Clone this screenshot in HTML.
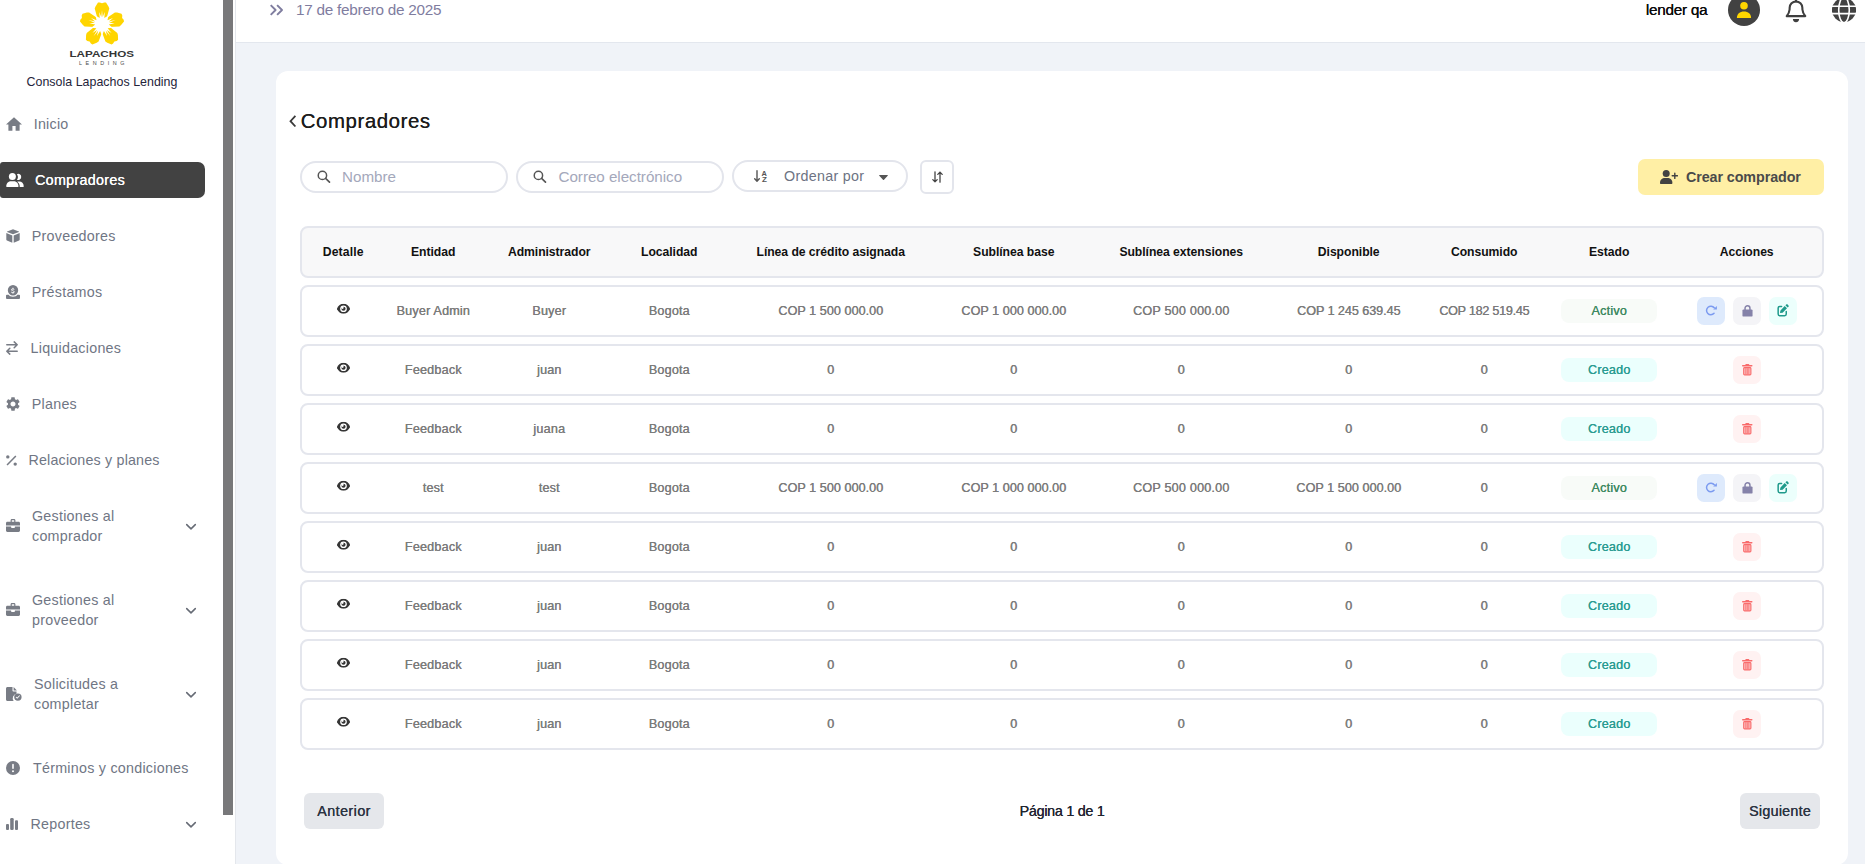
<!DOCTYPE html>
<html lang="es">
<head>
<meta charset="utf-8">
<title>Consola Lapachos Lending - Compradores</title>
<style>
*{box-sizing:border-box;margin:0;padding:0}
html,body{width:1865px;height:864px;overflow:hidden}
body{position:relative;background:#f0f3f8;font-family:"Liberation Sans",sans-serif;color:#212121}
svg{display:block}
.abs{position:absolute}

/* ---------- sidebar ---------- */
.sidebar{position:absolute;left:0;top:0;width:236px;height:864px;background:#fff;border-right:1px solid #e4e7ec}
.thumb{position:absolute;left:223px;top:0;width:10px;height:815px;background:#78787a}
.logo{position:absolute;left:60px;top:0;width:84px;height:68px}
.brand{position:absolute;left:0;top:75px;width:204px;text-align:center;font-size:12.4px;line-height:14px;color:#24243a;letter-spacing:.03px;white-space:nowrap}
.nav a{position:absolute;left:0;width:205px;height:36px;display:block;color:#707684;font-size:14.3px;text-decoration:none;white-space:nowrap}
.nav a svg{position:absolute;fill:#787c85}
.nav a span{position:absolute;line-height:20px;letter-spacing:.25px}
.nav a.on{background:#424242;border-radius:3px 7px 7px 3px;color:#fff}
.nav a.on svg{fill:#fff}
.nav a.on span{letter-spacing:.3px;font-weight:400;text-shadow:.2px 0 0 #fff}
.nav .chev{position:absolute;left:185px;width:12px;height:8px;fill:none!important;stroke:#666b75;stroke-width:1.5;stroke-linecap:round;stroke-linejoin:round}

/* ---------- topbar ---------- */
.topbar{position:absolute;left:236px;top:0;width:1629px;height:43px;background:#fff;border-bottom:1px solid #e3e7ee}
.date{position:absolute;left:60px;top:1px;font-size:15.3px;line-height:18px;color:#7f7d9f;letter-spacing:-.25px;white-space:nowrap}
.user{position:absolute;left:1409.8px;top:1px;font-size:15.3px;line-height:18px;color:#0c0c0c;letter-spacing:-.25px;text-shadow:.15px 0 0 #0c0c0c;white-space:nowrap}
.avatar{position:absolute;left:1492px;top:-6px;width:32px;height:32px;border-radius:50%;background:#424242}

/* ---------- card ---------- */
.card{position:absolute;left:276px;top:71px;width:1572px;height:794px;background:#fff;border-radius:12px}
h1{position:absolute;left:24.7px;top:38px;font-size:20.4px;line-height:24px;font-weight:400;color:#1d1d1d;letter-spacing:.58px;white-space:nowrap;text-shadow:.12px 0 0 #1d1d1d}
.pill{position:absolute;height:32px;border:2px solid #e3e5ec;border-radius:16px;background:#fff}
.pill span{position:absolute;top:5px;line-height:18px;font-size:15.2px;color:#a4a8bb;letter-spacing:.25px;white-space:nowrap}
.sq{position:absolute;left:644px;top:89px;width:34px;height:34px;border:2px solid #e3e5ec;border-radius:6px;background:#fff}
.create{position:absolute;left:1362px;top:88px;width:186px;height:36px;border-radius:7px;background:#ffefa5}
.create span{position:absolute;left:48px;top:9px;font-size:14.3px;line-height:18px;font-weight:700;color:#4a4a4a;letter-spacing:-.08px;white-space:nowrap}

/* ---------- table ---------- */
.tr{position:absolute;left:24px;width:1524px;height:52px;border:2px solid #e4e6ed;border-radius:8px;background:#fff}
.tr.head{background:#f8f8f9;top:155px}
.cells{position:absolute;left:-2.8px;top:-2px;width:1524px;height:52px;display:grid;grid-template-columns:88px 92px 140px 100px 223px 143px 192px 143px 128px 122px 153px;align-items:center;justify-items:center}
.cells>div{font-size:12.6px;line-height:16px;color:#7b7b7b;letter-spacing:.2px;white-space:nowrap;text-shadow:.3px 0 0 #7b7b7b}
.head .cells>div{font-size:12.2px;font-weight:700;color:#111;letter-spacing:-.05px;text-shadow:none}
.badge{width:96px;height:24px;border-radius:8px;line-height:24px!important;text-align:center}
.badge.act{background:#f8fbf8;color:#3f8a62!important;text-shadow:.15px 0 0 #3f8a62!important}
.badge.cre{background:#ebfffd;color:#2b9c92!important;text-shadow:.15px 0 0 #2b9c92!important}
.acts{display:flex;gap:8px}
.eye{transform:translateY(-2.35px)}
.btn{width:28px;height:28px;border-radius:7px;position:relative}
.btn svg{position:absolute}
.b1{background:#deeafc}.b2{background:#f4f4f7}.b3{background:#ecfffc}.b4{background:#fff2f2}

/* ---------- pager ---------- */
.pg{position:absolute;top:722px;width:80px;height:36px;border-radius:6px;background:#e5e7eb;font-size:14.3px;line-height:36px;text-align:center;color:#2c3442;letter-spacing:.25px;text-shadow:.2px 0 0 #2c3442}
.pgt{position:absolute;left:0;width:1572px;top:731px;text-align:center;font-size:14.3px;line-height:18px;color:#1f2430;letter-spacing:-.25px;text-shadow:.2px 0 0 #1f2430}
</style>
</head>
<body>

<!-- SIDEBAR -->
<aside class="sidebar">
  <div class="logo"><svg width="84" height="68" viewBox="0 0 84 68"><g fill="#ffd500"><polygon points="37.7,19.2 34.7,8.5 35.5,6.4 38.0,2.6 39.7,2.4 42.0,3.3 44.3,2.4 46.0,2.6 48.5,6.4 49.3,8.5 46.3,19.2"/><polygon points="45.6,18.7 54.9,12.5 57.1,12.6 61.5,13.8 62.3,15.4 62.1,17.9 63.7,19.8 64.0,21.5 61.1,25.0 59.4,26.5 48.3,26.9"/><polygon points="48.6,26.0 57.3,33.0 57.9,35.1 58.1,39.7 56.8,40.9 54.4,41.5 53.1,43.6 51.6,44.4 47.3,42.8 45.4,41.6 41.5,31.1"/><polygon points="42.5,31.1 38.6,41.6 36.7,42.8 32.4,44.4 30.9,43.6 29.6,41.5 27.2,40.9 25.9,39.7 26.1,35.1 26.7,33.0 35.4,26.0"/><polygon points="35.7,26.9 24.6,26.5 22.9,25.0 20.0,21.5 20.3,19.8 21.9,17.9 21.7,15.4 22.5,13.8 26.9,12.6 29.1,12.5 38.4,18.7"/></g><polygon fill="#fff" points="42.0,10.2 42.7,17.0 44.8,11.9 44.3,18.0 46.3,16.7 48.5,15.5 48.0,18.0 47.4,20.3 53.0,17.9 48.8,21.4 55.5,20.0 49.2,22.8 54.7,23.2 48.8,24.6 50.6,26.1 52.5,27.8 50.0,28.1 47.6,28.3 51.6,32.9 46.9,29.9 50.3,35.9 45.8,30.8 47.1,36.1 43.9,30.9 43.1,33.1 42.0,35.4 40.9,33.1 40.1,30.9 36.9,36.1 38.2,30.8 33.7,35.9 37.1,29.9 32.4,32.9 36.4,28.3 34.0,28.1 31.5,27.8 33.4,26.1 35.2,24.6 29.3,23.2 34.8,22.8 28.5,20.0 35.2,21.4 31.0,17.9 36.6,20.3 36.0,18.0 35.5,15.5 37.7,16.7 39.7,18.0 39.2,11.9 41.3,17.0"/><circle cx="42" cy="24.4" r="6.8" fill="#fff"/><text x="9.500" y="56.700" font-family="Liberation Sans, sans-serif" font-weight="700" font-size="8.200" fill="#353535" textLength="64.500" lengthAdjust="spacingAndGlyphs">LAPACHOS</text><text x="19" y="65" font-family="Liberation Sans, sans-serif" font-size="5.400" fill="#4a4a4a" textLength="45.500" lengthAdjust="spacing">LENDING</text></svg></div>
  <div class="brand">Consola Lapachos Lending</div>
  <nav class="nav">
<a style="top:106px"><svg style="left:6px;top:11px" width="16" height="14" viewBox="2 3 20 17"><path d="M10 20v-6h4v6h5v-8h3L12 3 2 12h3v8z"/></svg><span style="left:33.7px;top:8px">Inicio</span></a>
<a class="on" style="top:162px"><svg style="left:6px;top:11px" width="18" height="14" viewBox="0 0 20 16"><circle cx="7" cy="4" r="4"/><path d="M0 15c0-3.400 2.700-5.600 5.600-5.600h2.800c2.900 0 5.600 2.200 5.600 5.600 0 .6-.4 1-1 1H1c-.6 0-1-.4-1-1z"/><path d="M12.200 1.300a3.500 3.500 0 1 1 0 6.400 5.400 5.400 0 0 0 0-6.400z"/><path d="M15.300 16h3.700c.6 0 1-.4 1-1 0-3-2.300-5.300-5.100-5.300h-1.100c-.4 0-.8 0-1.200.2 1.700 1.200 2.800 3 2.800 5.300 0 .3 0 .500-.1.800z"/></svg><span style="left:35px;top:8px">Compradores</span></a>
<a style="top:218px"><svg style="left:6px;top:11px" width="14" height="14" viewBox="0 0 14 14"><path d="M7 .2l5.900 2.300c.2.100.2.300 0 .4L7 5.300 1.100 2.900c-.2-.100-.2-.300 0-.4z"/><path d="M.3 4.100l6 2.400v7.200L.9 11.400c-.4-.200-.6-.500-.6-.900z"/><path d="M13.700 4.100l-6 2.400v7.200l5.400-2.300c.4-.200.6-.500.6-.900z"/></svg><span style="left:31.8px;top:8px">Proveedores</span></a>
<a style="top:274px"><svg style="left:6px;top:11px" width="14" height="14" viewBox="0 0 14 14"><path d="M7 0a5.200 5.200 0 1 0 0 10.400A5.200 5.200 0 0 0 7 0zm.4 8v.7h-.9V8c-.7-.1-1.300-.5-1.400-1.300h.9c.1.400.4.600.9.600.6 0 .8-.3.800-.5 0-.3-.2-.6-1-.8-.9-.2-1.500-.6-1.500-1.300 0-.6.500-1.100 1.300-1.200v-.8h.9v.8c.7.200 1.100.7 1.100 1.300h-.9c0-.4-.3-.6-.7-.6s-.8.200-.8.500c0 .3.300.5 1 .700s1.500.5 1.500 1.400c0 .7-.5 1.100-1.200 1.200z"/><path d="M0 10.600c0-.5.400-.9.900-.9h1.700c.7 1 2.400 2 4.400 2s3.700-1 4.400-2h1.700c.5 0 .9.4.9.900v2.500c0 .5-.4.900-.9.900H.9c-.5 0-.9-.4-.9-.9z"/></svg><span style="left:31.8px;top:8px">Préstamos</span></a>
<a style="top:330px"><svg style="left:6px;top:11px;fill:none;stroke:#787c85;stroke-width:1.500;stroke-linecap:round;stroke-linejoin:round" width="12" height="14" viewBox="0 0 12 14"><path d="M.8 3.800h10.400M8.200 .9l3 2.900-3 2.900M11.200 10.200H.8M3.800 7.300l-3 2.900 3 2.900"/></svg><span style="left:30.500px;top:8px">Liquidaciones</span></a>
<a style="top:386px"><svg style="left:6px;top:11px" width="14" height="14" viewBox="2 2 20 20"><path d="M19.140 12.940c.04-.3.060-.61.060-.94 0-.32-.02-.64-.07-.94l2.030-1.580c.18-.14.230-.41.120-.61l-1.920-3.320c-.12-.22-.37-.29-.59-.22l-2.390.96c-.5-.38-1.030-.7-1.620-.94l-.36-2.540c-.04-.24-.24-.41-.48-.41h-3.840c-.24 0-.43.170-.47.410l-.36 2.540c-.59.240-1.130.57-1.620.94l-2.390-.96c-.22-.08-.47 0-.59.220L2.740 8.870c-.12.210-.08.470.12.610l2.030 1.580c-.05.300-.09.630-.09.940s.02.640.07.940l-2.030 1.580c-.18.140-.23.410-.12.610l1.920 3.320c.12.220.37.290.59.220l2.390-.96c.5.380 1.030.7 1.620.94l.36 2.540c.05.240.24.410.48.410h3.840c.24 0 .44-.17.470-.41l.36-2.540c.59-.24 1.130-.56 1.620-.94l2.390.96c.22.080.47 0 .59-.22l1.920-3.320c.12-.22.070-.47-.12-.61l-2.010-1.580zM12 15.600c-1.980 0-3.600-1.620-3.600-3.600s1.620-3.600 3.600-3.600 3.600 1.620 3.600 3.600-1.620 3.600-3.600 3.600z"/></svg><span style="left:31.8px;top:8px">Planes</span></a>
<a style="top:442px"><svg style="left:6px;top:13px" width="11" height="11" viewBox="0 0 11 11"><path d="M9.300.5l1.100 1.100-8.800 8.900L.5 9.400z"/><circle cx="1.800" cy="1.900" r="1.700"/><circle cx="9.200" cy="9.100" r="1.700"/></svg><span style="left:28.500px;top:8px;letter-spacing:.17px">Relaciones y planes</span></a>
<a style="top:498px;height:56px"><svg style="left:6px;top:21px" width="14" height="13" viewBox="0 0 14 13"><path d="M4.600 1.300v1.500H1.400C.6 2.800 0 3.400 0 4.200v2.300h14V4.200c0-.8-.6-1.400-1.400-1.400H9.400V1.300C9.400.6 8.800 0 8.100 0H5.900c-.7 0-1.300.6-1.300 1.300zm1.200 0c0-.1 0-.1.100-.1h2.200c.1 0 .1 0 .1.100v1.500H5.800z"/><path d="M0 7.600v4c0 .8.600 1.400 1.400 1.400h11.200c.8 0 1.400-.6 1.400-1.400v-4H8.900v.6c0 .4-.3.700-.7.700H5.800c-.4 0-.7-.3-.7-.7v-.6z"/></svg><span style="left:32px;top:8px">Gestiones al<br>comprador</span><svg class="chev" style="top:24.8px" viewBox="0 0 12 8"><path d="M1.700 1.600L6 5.900l4.300-4.300"/></svg></a>
<a style="top:582px;height:56px"><svg style="left:6px;top:21px" width="14" height="13" viewBox="0 0 14 13"><path d="M4.600 1.300v1.500H1.400C.6 2.800 0 3.400 0 4.200v2.300h14V4.200c0-.8-.6-1.400-1.400-1.400H9.400V1.300C9.400.6 8.800 0 8.100 0H5.900c-.7 0-1.300.6-1.300 1.300zm1.200 0c0-.1 0-.1.100-.1h2.200c.1 0 .1 0 .1.100v1.500H5.800z"/><path d="M0 7.600v4c0 .8.600 1.400 1.400 1.400h11.200c.8 0 1.400-.6 1.400-1.400v-4H8.900v.6c0 .4-.3.700-.7.700H5.800c-.4 0-.7-.3-.7-.7v-.6z"/></svg><span style="left:32px;top:8px">Gestiones al<br>proveedor</span><svg class="chev" style="top:24.8px" viewBox="0 0 12 8"><path d="M1.700 1.600L6 5.900l4.300-4.300"/></svg></a>
<a style="top:666px;height:56px"><svg style="left:6px;top:21px" width="16" height="14" viewBox="0 0 16 14"><path d="M1.500 0C.7 0 0 .7 0 1.500v11C0 13.300.7 14 1.500 14h6.100a4.600 4.600 0 0 1 2.900-7.200V4.500H7.300c-.5 0-.8-.4-.8-.8V0z"/><path d="M7.600 0v3.400h3.300z"/><path d="M11.900 7.600a3.700 3.700 0 1 0 0 7.400 3.700 3.700 0 0 0 0-7.400zm1.900 2.700l-2.300 2.500c-.2.200-.4.200-.6 0l-1-1.100c-.2-.2-.1-.4 0-.6.200-.1.400-.1.600 0l.7.700 2-2.100c.2-.2.400-.2.600 0 .1.200.1.400 0 .6z" transform="translate(0 -1.200)"/></svg><span style="left:34px;top:8px">Solicitudes a<br>completar</span><svg class="chev" style="top:24.8px" viewBox="0 0 12 8"><path d="M1.700 1.600L6 5.900l4.300-4.300"/></svg></a>
<a style="top:750px"><svg style="left:6px;top:11px" width="14" height="14" viewBox="0 0 14 14"><path d="M7 0a7 7 0 1 0 0 14A7 7 0 0 0 7 0zm-.8 3.500c0-.4.400-.8.800-.8s.8.400.8.800v3.700c0 .4-.4.800-.8.800s-.8-.4-.8-.8zM7 11.300a1 1 0 1 1 0-2 1 1 0 0 1 0 2z"/></svg><span style="left:33px;top:8px">Términos y condiciones</span></a>
<a style="top:806px"><svg style="left:6px;top:12px" width="12" height="12" viewBox="0 0 12 12"><rect x="0" y="6" width="3" height="6" rx="1"/><rect x="4.200" y="0" width="3.500" height="12" rx="1.300"/><rect x="9" y="2.200" width="3" height="9.800" rx="1"/></svg><span style="left:30.500px;top:8px">Reportes</span><svg class="chev" style="top:14.8px" viewBox="0 0 12 8"><path d="M1.700 1.600L6 5.900l4.300-4.300"/></svg></a>
</nav>
  <div class="thumb"></div>
</aside>

<!-- TOPBAR -->
<header class="topbar">
  <svg class="abs" style="left:33px;top:3px;fill:none;stroke:#7f7d9f;stroke-width:1.900;stroke-linecap:butt;stroke-linejoin:round" width="15" height="14" viewBox="0 0 15 14"><path d="M1.700 2.100L6.600 7l-4.900 4.900M8.100 2.100L13 7l-4.900 4.900"/></svg>
  <div class="date">17 de febrero de 2025</div>
  <div class="user">lender qa</div>
  <div class="avatar"><svg class="abs" style="left:8px;top:7px" width="16" height="18" viewBox="0 0 16 18"><circle cx="8" cy="4.700" r="3.800" fill="#ffd600"/><path d="M.9 17c0-4.300 2.900-6.600 7.100-6.600s7.100 2.300 7.100 6.600z" fill="#ffd600"/></svg></div>
  <svg class="abs" style="left:1549px;top:-2px" width="22" height="25" viewBox="0 0 22 25"><path d="M11 1.200v2.300" stroke="#3f3f3f" stroke-width="2.200" stroke-linecap="round"/><path d="M1.700 18.100H20.300C18.600 16 17.600 14 17.400 11.500L17.350 9.800C17.350 6.300 14.500 3.550 11 3.550S4.650 6.300 4.650 9.800L4.600 11.500C4.400 14 3.400 16 1.700 18.100Z" fill="none" stroke="#3f3f3f" stroke-width="2.100" stroke-linejoin="round"/><path d="M7.900 21.100h6.200a3.100 3.100 0 0 1-6.200 0z" fill="#3f3f3f"/></svg>
  <svg class="abs" style="left:1596px;top:-2px" width="24" height="25" viewBox="0 0 24 25"><circle cx="12" cy="12" r="12.100" fill="#424242"/><g fill="none" stroke="#fff" stroke-width="1.600"><ellipse cx="12" cy="12" rx="5.300" ry="12.800"/><path d="M-1 8.300h26M-1 15.650h26"/></g></svg>
</header>

<!-- CARD -->
<main class="card">
  <svg class="abs" style="left:12px;top:43px;fill:none;stroke:#3a3a3a;stroke-width:1.8;stroke-linecap:butt;stroke-linejoin:miter" width="9" height="14" viewBox="0 0 9 14"><path d="M7.4 1.9L2.5 7.2l4.900 5.300"/></svg>
  <h1>Compradores</h1>

  <div class="pill" style="left:24px;top:90px;width:208px"><svg class="abs" style="left:15.3px;top:7.3px" width="14" height="13" viewBox="0 0 15 14"><circle cx="5.800" cy="5.800" r="4.500" fill="none" stroke="#555" stroke-width="1.600"/><path d="M9.200 9.100l4.200 3.900" stroke="#555" stroke-width="1.800" stroke-linecap="round"/></svg><span style="left:40px;letter-spacing:0">Nombre</span></div>
  <div class="pill" style="left:240px;top:90px;width:208px"><svg class="abs" style="left:15.3px;top:7.3px" width="14" height="13" viewBox="0 0 15 14"><circle cx="5.800" cy="5.800" r="4.500" fill="none" stroke="#555" stroke-width="1.600"/><path d="M9.200 9.100l4.200 3.900" stroke="#555" stroke-width="1.800" stroke-linecap="round"/></svg><span style="left:40.500px;letter-spacing:-.03px">Correo electrónico</span></div>
  <div class="pill" style="left:456px;top:89px;width:176px"><svg class="abs" style="left:20px;top:8px" width="14" height="13" viewBox="0 0 14 13"><path d="M3 .8v10M.7 8.800L3 11.200l2.300-2.400" fill="none" stroke="#555" stroke-width="1.400" stroke-linecap="round" stroke-linejoin="round"/><text x="7.4" y="5.7" font-family="Liberation Sans, sans-serif" font-weight="700" font-size="7.4" fill="#555">A</text><text x="8.1" y="12.3" font-family="Liberation Sans, sans-serif" font-weight="700" font-size="6.7" fill="#555" textLength="4.9" lengthAdjust="spacingAndGlyphs">Z</text></svg><span style="left:50px;top:4px;line-height:20px;font-size:14.300px;color:#6d7383;letter-spacing:.3px">Ordenar por</span><svg class="abs" style="left:144.500px;top:12.500px" width="9" height="5" viewBox="0 0 9 5"><path d="M.6 0h7.800c.4 0 .6.500.3.800L5 4.700c-.3.300-.7.300-1 0L.3.800C0 .5.200 0 .6 0z" fill="#555"/></svg></div>
  <div class="sq"><svg class="abs" style="left:10px;top:9px;fill:none;stroke:#444;stroke-width:1.300;stroke-linecap:round;stroke-linejoin:round" width="11" height="12" viewBox="0 0 11 12"><path d="M3 .8v10M.8 8.600L3 10.900l2.200-2.300M8 11.200v-10M5.800 3.400L8 1.100l2.200 2.300"/></svg></div>
  <div class="create"><svg class="abs" style="left:22px;top:11px" width="18" height="14" viewBox="0 0 18 14"><circle cx="6.200" cy="3.500" r="3.500" fill="#424242"/><path d="M0 13c0-3.200 2.200-5 4.900-5h2.600c2.700 0 4.900 1.800 4.900 5 0 .6-.4 1-1 1H1c-.6 0-1-.4-1-1z" fill="#424242"/><path d="M14.800 3.200v5.200M12.200 5.800h5.200" stroke="#424242" stroke-width="1.400" stroke-linecap="round"/></svg><span>Crear comprador</span></div>

  <div class="tr head"><div class="cells"><div style="letter-spacing:.15px">Detalle</div><div>Entidad</div><div>Administrador</div><div>Localidad</div><div>Línea de crédito asignada</div><div>Sublínea base</div><div>Sublínea extensiones</div><div>Disponible</div><div>Consumido</div><div>Estado</div><div>Acciones</div></div></div>
  <div class="tr" style="top:214px"><div class="cells"><div><svg class="eye" width="13" height="10.2" viewBox="0 0 13 10.2"><path d="M6.5 0C3.6 0 1.2 1.9.1 4.600c-.1.300-.1.700 0 1C1.2 8.300 3.600 10.200 6.500 10.200s5.300-1.900 6.400-4.600c.1-.3.1-.7 0-1C11.800 1.900 9.400 0 6.500 0z" fill="#353535"/><circle cx="6.500" cy="5.100" r="3.350" fill="#fff"/><circle cx="6.500" cy="5.100" r="2.100" fill="#353535"/><circle cx="5.500" cy="4.100" r="1.150" fill="#fff"/></svg></div><div>Buyer Admin</div><div>Buyer</div><div>Bogota</div><div style="letter-spacing:.05px">COP 1 500 000.00</div><div style="letter-spacing:.05px">COP 1 000 000.00</div><div>COP 500 000.00</div><div style="letter-spacing:-.05px">COP 1 245 639.45</div><div style="letter-spacing:-.25px">COP 182 519.45</div><div class="badge act">Activo</div><div class="acts"><div class="btn b1"><svg style="left:8px;top:8.4px" width="13" height="11" viewBox="0 0 13 11"><path d="M9.24 2.8A4.3 4.3 0 1 0 9.05 8.33" fill="none" stroke="#7c9bf0" stroke-width="1.5" stroke-linecap="round"/><path d="M11.9 .9v3.7H8.2z" fill="#7c9bf0"/></svg></div><div class="btn b2"><svg style="left:9.4px;top:8px" width="11" height="12" viewBox="0 0 11 12"><path d="M3.05 5V3.2a2.45 2.45 0 0 1 4.9 0V5" fill="none" stroke="#8582a9" stroke-width="1.5"/><rect x=".45" y="4.4" width="10.1" height="7.2" rx="1.2" fill="#8582a9"/></svg></div><div class="btn b3"><svg style="left:7.5px;top:7.4px" width="13" height="13" viewBox="0 0 13 13"><path d="M5.6 2.45H3.75c-.9 0-1.6.7-1.6 1.6v6c0 .9.7 1.6 1.6 1.6h4.9c.9 0 1.6-.7 1.6-1.6V7.6" fill="none" stroke="#1f9a8b" stroke-width="1.5" stroke-linecap="round"/><path d="M10.200.5c.4-.4 1-.4 1.400 0l.9.900c.4.400.4 1 0 1.400l-.8.800-2.300-2.300zM8.700 2l2.300 2.300-4.100 4.100c-.2.200-.4.300-.6.300l-1.800.4c-.3.100-.5-.2-.500-.5l.4-1.800c.1-.2.200-.4.300-.6z" fill="#1f9a8b"/></svg></div></div></div></div>
  <div class="tr" style="top:273px"><div class="cells"><div><svg class="eye" width="13" height="10.2" viewBox="0 0 13 10.2"><path d="M6.5 0C3.6 0 1.2 1.9.1 4.600c-.1.300-.1.700 0 1C1.2 8.300 3.600 10.200 6.500 10.200s5.300-1.900 6.400-4.600c.1-.3.1-.7 0-1C11.800 1.900 9.400 0 6.500 0z" fill="#353535"/><circle cx="6.500" cy="5.100" r="3.350" fill="#fff"/><circle cx="6.500" cy="5.100" r="2.100" fill="#353535"/><circle cx="5.500" cy="4.100" r="1.150" fill="#fff"/></svg></div><div>Feedback</div><div>juan</div><div>Bogota</div><div>0</div><div>0</div><div>0</div><div>0</div><div>0</div><div class="badge cre">Creado</div><div class="acts"><div class="btn b4"><svg style="left:9.5px;top:7.9px" width="11" height="12" viewBox="0 0 11 12"><rect x="3.3" y="0" width="4" height="1.6" rx=".8" fill="#f96b6b"/><rect x="0" y=".9" width="10.5" height="1.5" rx=".75" fill="#f96b6b"/><rect x="1.7" y="3.6" width="7.2" height="7.3" rx=".9" fill="#fdc0c0" stroke="#f96b6b" stroke-width="1.1"/><path d="M3.8 4.2v6M5.3 4.2v6M6.8 4.2v6" stroke="#f96b6b" stroke-width=".8"/></svg></div></div></div></div>
  <div class="tr" style="top:332px"><div class="cells"><div><svg class="eye" width="13" height="10.2" viewBox="0 0 13 10.2"><path d="M6.5 0C3.6 0 1.2 1.9.1 4.600c-.1.300-.1.700 0 1C1.2 8.300 3.600 10.200 6.500 10.200s5.300-1.900 6.400-4.600c.1-.3.1-.7 0-1C11.800 1.900 9.400 0 6.500 0z" fill="#353535"/><circle cx="6.500" cy="5.100" r="3.350" fill="#fff"/><circle cx="6.500" cy="5.100" r="2.100" fill="#353535"/><circle cx="5.500" cy="4.100" r="1.150" fill="#fff"/></svg></div><div>Feedback</div><div>juana</div><div>Bogota</div><div>0</div><div>0</div><div>0</div><div>0</div><div>0</div><div class="badge cre">Creado</div><div class="acts"><div class="btn b4"><svg style="left:9.5px;top:7.9px" width="11" height="12" viewBox="0 0 11 12"><rect x="3.3" y="0" width="4" height="1.6" rx=".8" fill="#f96b6b"/><rect x="0" y=".9" width="10.5" height="1.5" rx=".75" fill="#f96b6b"/><rect x="1.7" y="3.6" width="7.2" height="7.3" rx=".9" fill="#fdc0c0" stroke="#f96b6b" stroke-width="1.1"/><path d="M3.8 4.2v6M5.3 4.2v6M6.8 4.2v6" stroke="#f96b6b" stroke-width=".8"/></svg></div></div></div></div>
  <div class="tr" style="top:391px"><div class="cells"><div><svg class="eye" width="13" height="10.2" viewBox="0 0 13 10.2"><path d="M6.5 0C3.6 0 1.2 1.9.1 4.600c-.1.300-.1.700 0 1C1.2 8.300 3.600 10.200 6.500 10.200s5.300-1.900 6.400-4.600c.1-.3.1-.7 0-1C11.800 1.900 9.400 0 6.500 0z" fill="#353535"/><circle cx="6.500" cy="5.100" r="3.350" fill="#fff"/><circle cx="6.500" cy="5.100" r="2.100" fill="#353535"/><circle cx="5.500" cy="4.100" r="1.150" fill="#fff"/></svg></div><div>test</div><div>test</div><div>Bogota</div><div style="letter-spacing:.05px">COP 1 500 000.00</div><div style="letter-spacing:.05px">COP 1 000 000.00</div><div>COP 500 000.00</div><div style="letter-spacing:.05px">COP 1 500 000.00</div><div>0</div><div class="badge act">Activo</div><div class="acts"><div class="btn b1"><svg style="left:8px;top:8.4px" width="13" height="11" viewBox="0 0 13 11"><path d="M9.24 2.8A4.3 4.3 0 1 0 9.05 8.33" fill="none" stroke="#7c9bf0" stroke-width="1.5" stroke-linecap="round"/><path d="M11.9 .9v3.7H8.2z" fill="#7c9bf0"/></svg></div><div class="btn b2"><svg style="left:9.4px;top:8px" width="11" height="12" viewBox="0 0 11 12"><path d="M3.05 5V3.2a2.45 2.45 0 0 1 4.9 0V5" fill="none" stroke="#8582a9" stroke-width="1.5"/><rect x=".45" y="4.4" width="10.1" height="7.2" rx="1.2" fill="#8582a9"/></svg></div><div class="btn b3"><svg style="left:7.5px;top:7.4px" width="13" height="13" viewBox="0 0 13 13"><path d="M5.6 2.45H3.75c-.9 0-1.6.7-1.6 1.6v6c0 .9.7 1.6 1.6 1.6h4.9c.9 0 1.6-.7 1.6-1.6V7.6" fill="none" stroke="#1f9a8b" stroke-width="1.5" stroke-linecap="round"/><path d="M10.200.5c.4-.4 1-.4 1.400 0l.9.900c.4.400.4 1 0 1.400l-.8.800-2.300-2.300zM8.700 2l2.300 2.300-4.100 4.100c-.2.200-.4.300-.6.300l-1.800.4c-.3.100-.5-.2-.500-.5l.4-1.800c.1-.2.200-.4.300-.6z" fill="#1f9a8b"/></svg></div></div></div></div>
  <div class="tr" style="top:450px"><div class="cells"><div><svg class="eye" width="13" height="10.2" viewBox="0 0 13 10.2"><path d="M6.5 0C3.6 0 1.2 1.9.1 4.600c-.1.300-.1.700 0 1C1.2 8.300 3.600 10.200 6.500 10.200s5.300-1.900 6.400-4.600c.1-.3.1-.7 0-1C11.800 1.900 9.400 0 6.500 0z" fill="#353535"/><circle cx="6.500" cy="5.100" r="3.350" fill="#fff"/><circle cx="6.500" cy="5.100" r="2.100" fill="#353535"/><circle cx="5.500" cy="4.100" r="1.150" fill="#fff"/></svg></div><div>Feedback</div><div>juan</div><div>Bogota</div><div>0</div><div>0</div><div>0</div><div>0</div><div>0</div><div class="badge cre">Creado</div><div class="acts"><div class="btn b4"><svg style="left:9.5px;top:7.9px" width="11" height="12" viewBox="0 0 11 12"><rect x="3.3" y="0" width="4" height="1.6" rx=".8" fill="#f96b6b"/><rect x="0" y=".9" width="10.5" height="1.5" rx=".75" fill="#f96b6b"/><rect x="1.7" y="3.6" width="7.2" height="7.3" rx=".9" fill="#fdc0c0" stroke="#f96b6b" stroke-width="1.1"/><path d="M3.8 4.2v6M5.3 4.2v6M6.8 4.2v6" stroke="#f96b6b" stroke-width=".8"/></svg></div></div></div></div>
  <div class="tr" style="top:509px"><div class="cells"><div><svg class="eye" width="13" height="10.2" viewBox="0 0 13 10.2"><path d="M6.5 0C3.6 0 1.2 1.9.1 4.600c-.1.300-.1.700 0 1C1.2 8.300 3.600 10.200 6.500 10.200s5.300-1.900 6.400-4.600c.1-.3.1-.7 0-1C11.800 1.900 9.400 0 6.500 0z" fill="#353535"/><circle cx="6.500" cy="5.100" r="3.350" fill="#fff"/><circle cx="6.500" cy="5.100" r="2.100" fill="#353535"/><circle cx="5.500" cy="4.100" r="1.150" fill="#fff"/></svg></div><div>Feedback</div><div>juan</div><div>Bogota</div><div>0</div><div>0</div><div>0</div><div>0</div><div>0</div><div class="badge cre">Creado</div><div class="acts"><div class="btn b4"><svg style="left:9.5px;top:7.9px" width="11" height="12" viewBox="0 0 11 12"><rect x="3.3" y="0" width="4" height="1.6" rx=".8" fill="#f96b6b"/><rect x="0" y=".9" width="10.5" height="1.5" rx=".75" fill="#f96b6b"/><rect x="1.7" y="3.6" width="7.2" height="7.3" rx=".9" fill="#fdc0c0" stroke="#f96b6b" stroke-width="1.1"/><path d="M3.8 4.2v6M5.3 4.2v6M6.8 4.2v6" stroke="#f96b6b" stroke-width=".8"/></svg></div></div></div></div>
  <div class="tr" style="top:568px"><div class="cells"><div><svg class="eye" width="13" height="10.2" viewBox="0 0 13 10.2"><path d="M6.5 0C3.6 0 1.2 1.9.1 4.600c-.1.300-.1.700 0 1C1.2 8.300 3.600 10.200 6.500 10.200s5.300-1.900 6.400-4.600c.1-.3.1-.7 0-1C11.800 1.900 9.400 0 6.500 0z" fill="#353535"/><circle cx="6.500" cy="5.100" r="3.350" fill="#fff"/><circle cx="6.500" cy="5.100" r="2.100" fill="#353535"/><circle cx="5.500" cy="4.100" r="1.150" fill="#fff"/></svg></div><div>Feedback</div><div>juan</div><div>Bogota</div><div>0</div><div>0</div><div>0</div><div>0</div><div>0</div><div class="badge cre">Creado</div><div class="acts"><div class="btn b4"><svg style="left:9.5px;top:7.9px" width="11" height="12" viewBox="0 0 11 12"><rect x="3.3" y="0" width="4" height="1.6" rx=".8" fill="#f96b6b"/><rect x="0" y=".9" width="10.5" height="1.5" rx=".75" fill="#f96b6b"/><rect x="1.7" y="3.6" width="7.2" height="7.3" rx=".9" fill="#fdc0c0" stroke="#f96b6b" stroke-width="1.1"/><path d="M3.8 4.2v6M5.3 4.2v6M6.8 4.2v6" stroke="#f96b6b" stroke-width=".8"/></svg></div></div></div></div>
  <div class="tr" style="top:627px"><div class="cells"><div><svg class="eye" width="13" height="10.2" viewBox="0 0 13 10.2"><path d="M6.5 0C3.6 0 1.2 1.9.1 4.600c-.1.300-.1.700 0 1C1.2 8.300 3.600 10.200 6.500 10.200s5.300-1.900 6.400-4.600c.1-.3.1-.7 0-1C11.800 1.900 9.400 0 6.500 0z" fill="#353535"/><circle cx="6.500" cy="5.100" r="3.350" fill="#fff"/><circle cx="6.500" cy="5.100" r="2.100" fill="#353535"/><circle cx="5.500" cy="4.100" r="1.150" fill="#fff"/></svg></div><div>Feedback</div><div>juan</div><div>Bogota</div><div>0</div><div>0</div><div>0</div><div>0</div><div>0</div><div class="badge cre">Creado</div><div class="acts"><div class="btn b4"><svg style="left:9.5px;top:7.9px" width="11" height="12" viewBox="0 0 11 12"><rect x="3.3" y="0" width="4" height="1.6" rx=".8" fill="#f96b6b"/><rect x="0" y=".9" width="10.5" height="1.5" rx=".75" fill="#f96b6b"/><rect x="1.7" y="3.6" width="7.2" height="7.3" rx=".9" fill="#fdc0c0" stroke="#f96b6b" stroke-width="1.1"/><path d="M3.8 4.2v6M5.3 4.2v6M6.8 4.2v6" stroke="#f96b6b" stroke-width=".8"/></svg></div></div></div></div>
  <div class="pg" style="left:28px;letter-spacing:.45px">Anterior</div>
  <div class="pgt">Página 1 de 1</div>
  <div class="pg" style="left:1464px">Siguiente</div>

</main>

</body>
</html>
